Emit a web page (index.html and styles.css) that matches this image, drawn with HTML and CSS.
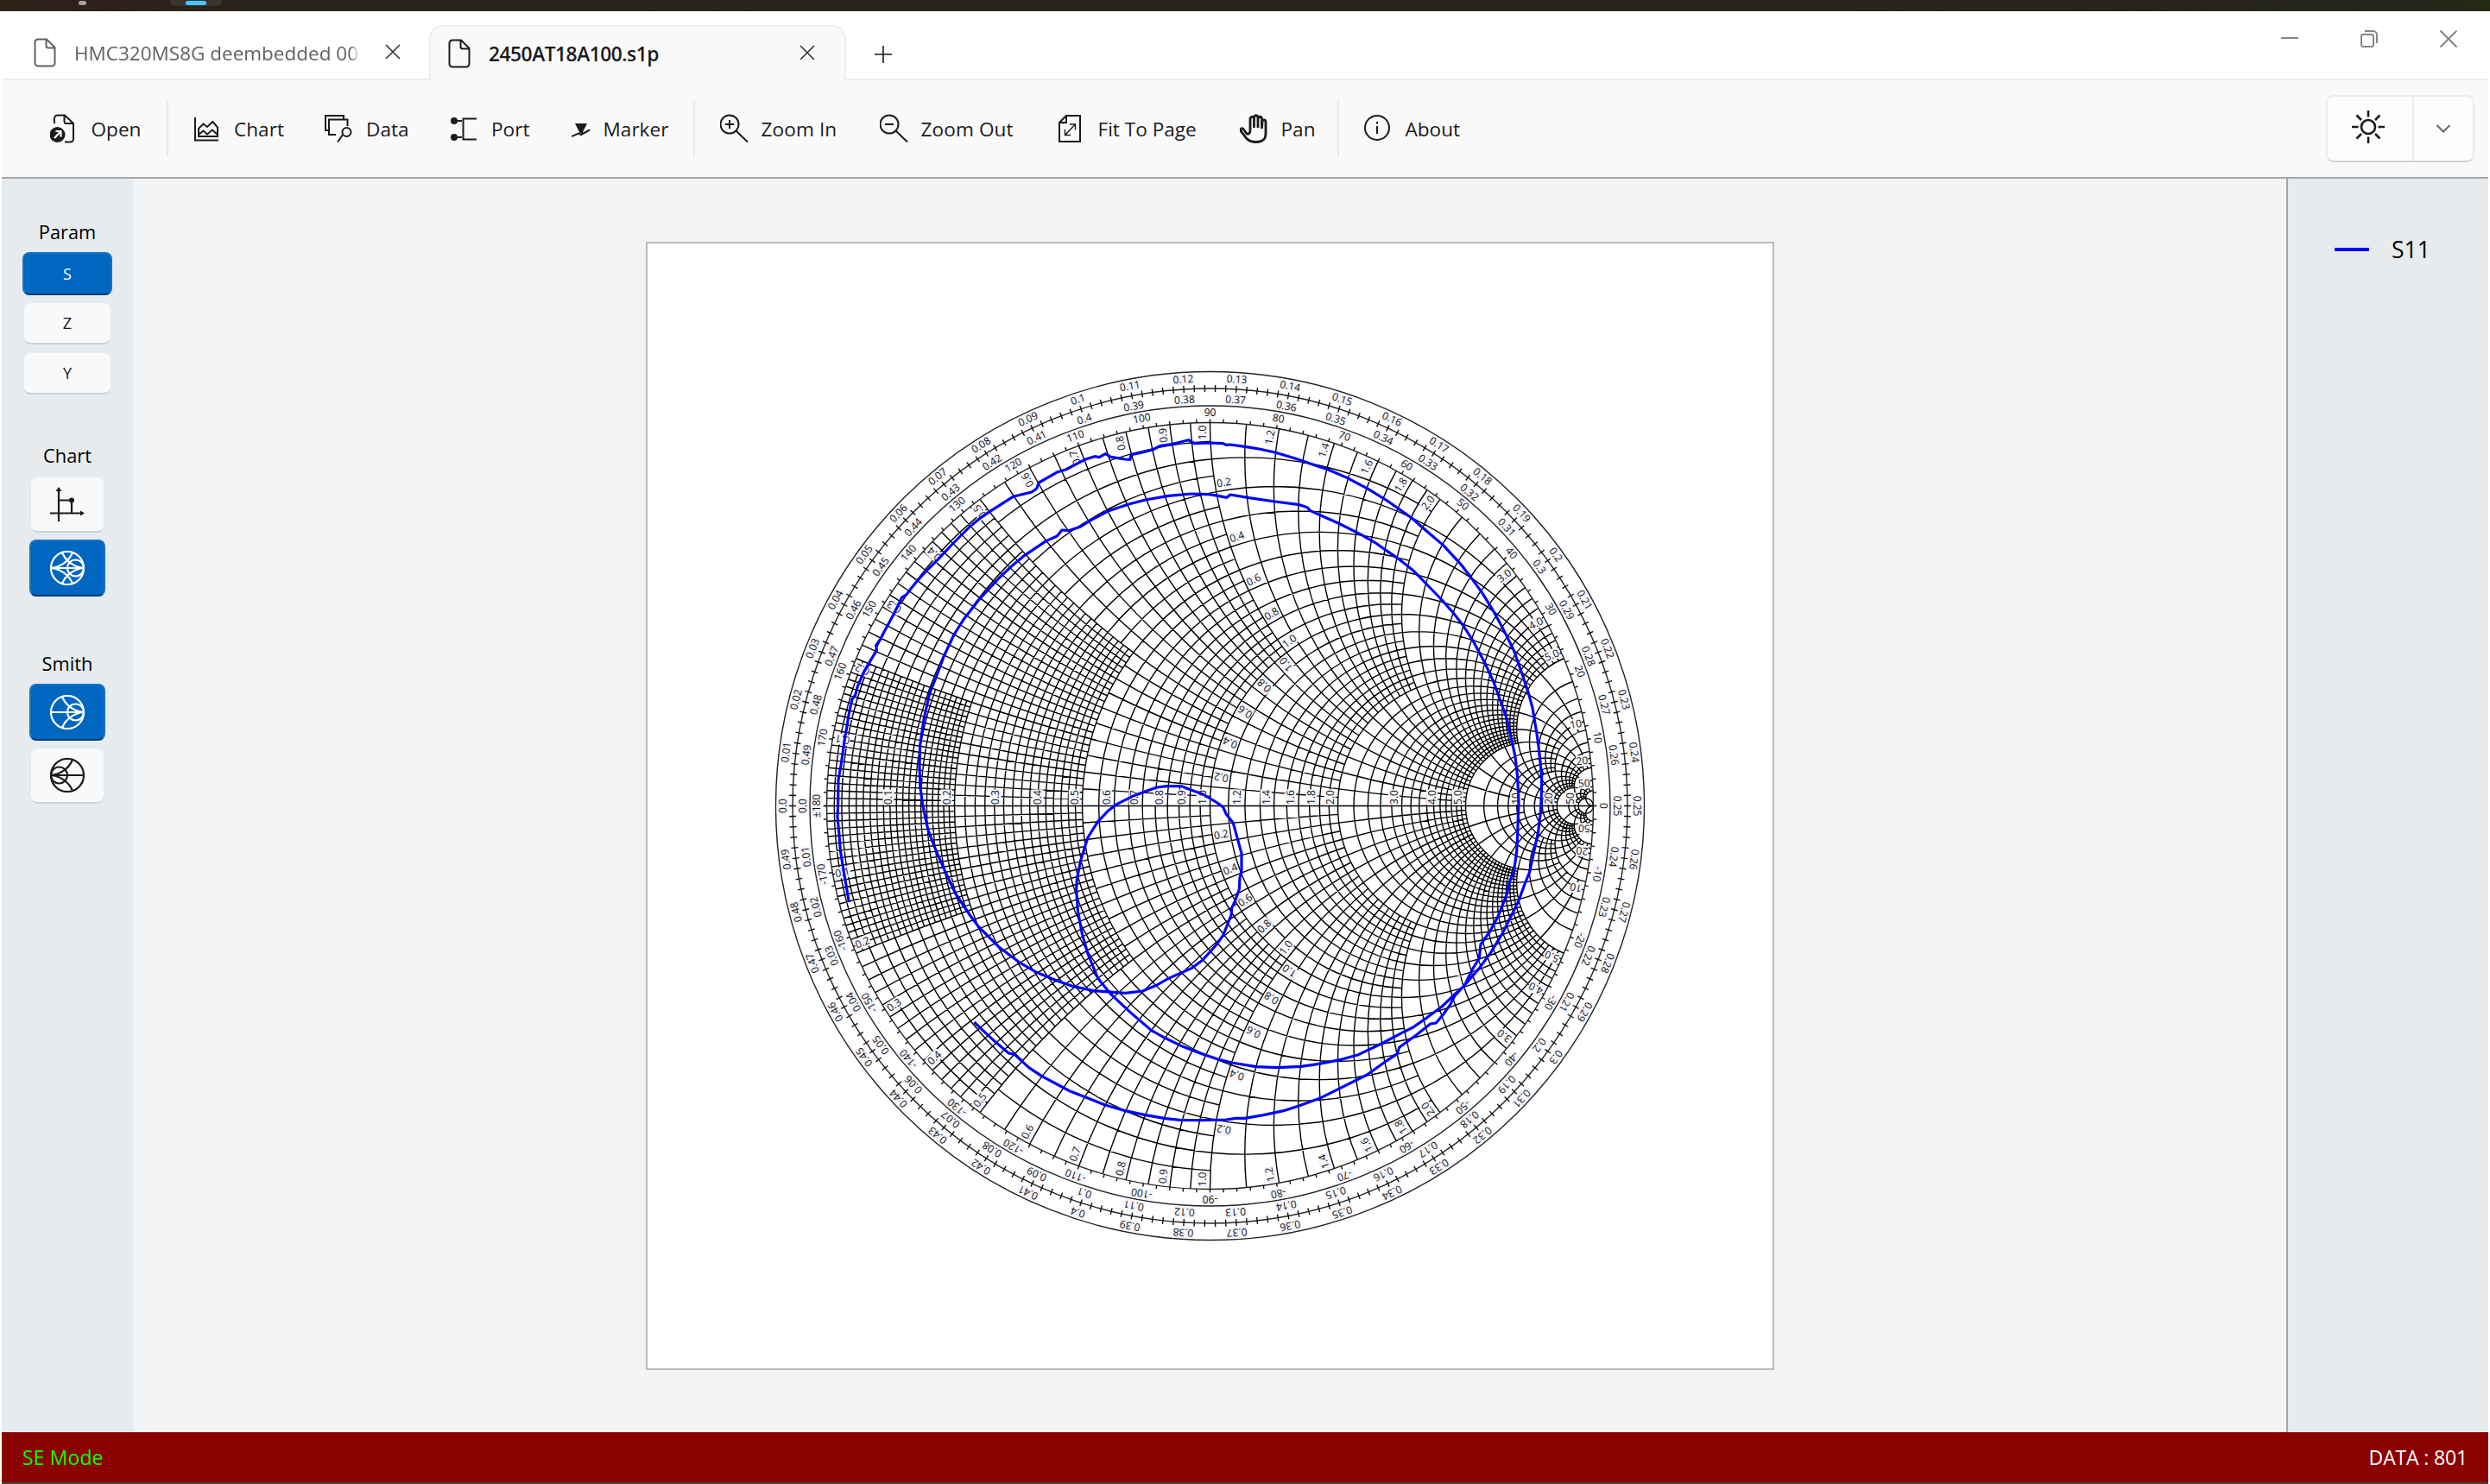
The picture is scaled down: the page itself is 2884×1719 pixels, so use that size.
FILE: index.html
```html
<!DOCTYPE html>
<html lang="en">
<head>
<meta charset="utf-8">
<title>2450AT18A100.s1p</title>
<link rel="stylesheet" href="styles.css">
</head>
<body>
<div class="desktop-strip"><i class="dot"></i><span class="task"><i class="pill"></i></span></div>
<div class="window">
  <header class="titlebar">
    <div class="tab">
      <svg class="doc" width="26" height="34" viewBox="0 0 26 34"><path d="M5 1.5H15L24.5 11V29a3.5 3.5 0 0 1-3.5 3.500H5A3.500 3.500 0 0 1 1.500 29V5A3.500 3.500 0 0 1 5 1.500zM14.500 2V9a2.500 2.500 0 0 0 2.500 2.500H24"/></svg>
      <span class="tab-title">HMC320MS8G deembedded 00</span>
      <svg class="x" width="18" height="18" viewBox="0 0 18 18"><path d="M1 1 17 17M17 1 1 17"/></svg>
    </div>
    <div class="tab active">
      <svg class="doc" width="26" height="34" viewBox="0 0 26 34"><path d="M5 1.500H15L24.500 11V29a3.500 3.500 0 0 1-3.500 3.500H5A3.500 3.500 0 0 1 1.500 29V5A3.500 3.500 0 0 1 5 1.500zM14.500 2V9a2.500 2.500 0 0 0 2.500 2.500H24"/></svg>
      <span class="tab-title">2450AT18A100.s1p</span>
      <svg class="x" width="18" height="18" viewBox="0 0 18 18"><path d="M1 1 17 17M17 1 1 17"/></svg>
    </div>
    <svg class="plus" width="20" height="20" viewBox="0 0 20 20"><path d="M10 0V20M0 10H20"/></svg>
    <div class="caption">
      <svg width="20" height="20" viewBox="0 0 20 20"><path d="M0 9H20"/></svg>
      <svg width="20" height="20" viewBox="0 0 20 20"><rect x="1" y="5" width="14" height="14" rx="2"/><path d="M5 1H14.500a4.500 4.500 0 0 1 4.500 4.500V15"/></svg>
      <svg width="20" height="20" viewBox="0 0 20 20"><path d="M.5.500 19.500 19.500M19.500.500.500 19.500"/></svg>
    </div>
  </header>

  <nav class="toolbar">
    <div class="tool"><svg width="34" height="34" viewBox="0 0 34 34"><path d="M5 11V5a3.500 3.500 0 0 1 3.500-3.500H17L27 11V29a3.500 3.500 0 0 1-3.500 3.500H17M16.500 2V8.500a2.500 2.500 0 0 0 2.500 2.500H27"/><circle cx="8.500" cy="24" r="9" class="fill"/><path d="M5 28 12 20.500M6.500 20H12.500V26.500" class="inv"/></svg><span class="w-open">Open</span></div>
    <i class="sep"></i>
    <div class="tool"><svg width="34" height="34" viewBox="0 0 34 34"><path d="M3 4V30.500H30M7 26V17L12.500 11.500 17 15 23.500 9 29 15.500V26ZM7 24 12.500 19.500 17 23.500 23 18.500 29 24"/></svg><span class="w-chart">Chart</span></div>
    <div class="tool"><svg width="34" height="34" viewBox="0 0 34 34"><path d="M6 19H1V2H22V6M13 24H5V6.500H26.500V14M21 24 15 32.500"/><circle cx="25.500" cy="21" r="5"/></svg><span class="w-data">Data</span></div>
    <div class="tool"><svg width="34" height="34" viewBox="0 0 34 34"><path d="M4 8H14M4 27H14M31 5.500H15.500V29.500H31"/><circle cx="5" cy="8" r="4" class="fill"/><circle cx="5" cy="27" r="4" class="fill"/></svg><span class="w-port">Port</span></div>
    <div class="tool narrow"><svg width="22" height="34" viewBox="0 0 22 34"><path d="M4 11H18L12.500 22 9.500 22Z" class="fill"/><path d="M0 26 8 22.500 11 24 21 18.500M12 24V21"/></svg><span class="w-marker">Marker</span></div>
    <i class="sep"></i>
    <div class="tool"><svg width="34" height="34" viewBox="0 0 34 34"><circle cx="11" cy="12" r="10.500"/><path d="M18.500 19.500 32 32.500M6 12H16M11 7V17"/></svg><span class="w-zin">Zoom In</span></div>
    <div class="tool"><svg width="34" height="34" viewBox="0 0 34 34"><circle cx="11" cy="12" r="10.500"/><path d="M18.500 19.500 32 32.500M6 12H16"/></svg><span class="w-zout">Zoom Out</span></div>
    <div class="tool"><svg width="34" height="34" viewBox="0 0 34 34"><path d="M11 2H27V32H3V10ZM11 2V10H3"/><path d="M10 24 21 12.500M15 12H21.500V18.500M9.500 18V24.500H16" class="thin"/></svg><span class="w-fit">Fit To Page</span></div>
    <div class="tool"><svg width="34" height="34" viewBox="0 0 34 34"><path d="M8 23 4 17.500C1.500 15 0 18.500 2 21L8 28.500C11 32 14 32.500 19 32.500 26 32.500 30 29 30 23V9.500C30 6 26 6 26 9.500L25.500 17V5.500C25 2.500 21.500 2.500 21 5.500V16 4C20.500 1 17 1 16.500 4V16 5.500C16 2.500 12.500 3 12 5.500V19C12 22 10 24 8 23Z" class="hand"/></svg><span class="w-pan">Pan</span></div>
    <i class="sep"></i>
    <div class="tool"><svg width="34" height="34" viewBox="0 0 34 34"><circle cx="15" cy="16" r="14"/><path d="M15 14V23M15 9V11.500"/></svg><span class="w-about">About</span></div>
    <div class="theme">
      <div class="sun"><svg width="40" height="40" viewBox="0 0 40 40"><circle cx="20" cy="20" r="8"/><path d="M20 1V8.500M20 31.500V39M1 20H8.500M31.500 20H39M6.500 6.500 12 12M28 28 33.500 33.500M33.500 6.500 28 12M12 28 6.500 33.500"/></svg></div>
      <div class="drop"><svg width="16" height="10" viewBox="0 0 16 10"><path d="M.5 1 8 8.500 15.500 1"/></svg></div>
    </div>
  </nav>

  <main class="workspace">
    <aside class="sidebar">
      <h2>Param</h2>
      <button class="btn wide on">S</button>
      <button class="btn wide">Z</button>
      <button class="btn wide">Y</button>
      <h2 class="chart-head">Chart</h2>
      <button class="btn"><svg width="40" height="40" viewBox="0 0 40 40"><path d="M0 30.500H36M10 40V4M10 15.500H25V30.500"/><path d="M10 0 13.500 5H6.500ZM40 30.500 35 27.500V33.500Z" class="fill"/><circle cx="25" cy="15.500" r="3" class="fill"/></svg></button>
      <button class="btn on"><svg width="40" height="40" viewBox="0 0 40 40"><circle cx="20" cy="20" r="19"/><circle cx="29.500" cy="20" r="9.500"/><path d="M1 20H39M14 2C18 12 28 19 39 20 28 21 18 28 14 38M26 2C22 12 12 19 1 20 12 21 22 28 26 38"/></svg></button>
      <h2 class="smith-head">Smith</h2>
      <button class="btn on last"><svg width="40" height="40" viewBox="0 0 40 40"><circle cx="20" cy="20" r="19"/><circle cx="29.500" cy="20" r="9.500"/><path d="M1 20H39M14 2C18 12 28 19 39 20 28 21 18 28 14 38"/></svg></button>
      <button class="btn"><svg width="40" height="40" viewBox="0 0 40 40"><circle cx="20" cy="20" r="19"/><circle cx="10.500" cy="20" r="9.500"/><path d="M1 20H39M26 2C22 12 12 19 1 20 12 21 22 28 26 38"/></svg></button>
    </aside>
    <section class="canvas">
      <div class="page"><svg id="smith" width="1303" height="1303" viewBox="-651.5 -651.5 1303 1303"></svg></div>
    </section>
    <aside class="legend"><i class="swatch"></i><span>S11</span></aside>
  </main>

  <footer class="status"><span class="mode">SE Mode</span><span class="count">DATA : 801</span></footer>
</div>
<script src="smith.js"></script>
</body>
</html>
```
FILE: smith.js
```js
// Smith chart: impedance grid, scales, labels and the S11 trace.
const NS = 'http://www.w3.org/2000/svg';
const svg = document.getElementById('smith');
const R = 444;
const rad = Math.PI / 180;

function add(tag, attrs, parent) {
  const el = document.createElementNS(NS, tag);
  for (const k in attrs) el.setAttribute(k, attrs[k]);
  (parent || svg).appendChild(el);
  return el;
}

// Reflection coefficient of r + jx, in chart pixels with y pointing up.
function gamma(r, x) {
  const d = (r + 1) * (r + 1) + x * x;
  return [R * (r * r - 1 + x * x) / d, R * 2 * x / d];
}

function fmt(p) { return p[0].toFixed(2) + ' ' + (-p[1]).toFixed(2); }

// Grid: nested squares, each with its own step; the last one runs to infinity.
const bands = [[0.2, 0.01], [0.5, 0.02], [1, 0.05], [2, 0.1], [5, 0.2], [10, 1], [20, 2], [50, 10], [Infinity, 50]];
let d = '';
let prev = 0;
for (const [max, step] of bands) {
  const last = max === Infinity;
  const n = last ? 1 : Math.round(max / step);
  for (let i = 1; i <= n; i++) {
    const v = i * step;
    const from = v <= prev + 1e-9 ? prev : 0;
    for (const s of [1, -1]) {
      const rEnd = last ? [R, 0] : gamma(v, s * max);
      const rr = R / (v + 1);
      d += `M${fmt(gamma(v, s * from))}A${rr} ${rr} 0 0 ${s > 0 ? 1 : 0} ${fmt(rEnd)}`;
      const xEnd = last ? [R, 0] : gamma(max, s * v);
      const xr = R / v;
      d += `M${fmt(gamma(from, s * v))}A${xr} ${xr} 0 0 ${s > 0 ? 0 : 1} ${fmt(xEnd)}`;
    }
  }
  prev = max;
}
d += `M${-R - 3} 0H${R}`;
add('path', { d, class: 'grid' });

for (const r of [R, 463.5, 483.5, 503]) add('circle', { r, class: 'ring' });

let ticks = '';
for (let a = 0; a < 360; a += 2) {
  const c = Math.cos(a * rad), s = Math.sin(a * rad);
  ticks += `M${c * R} ${s * R}L${c * (R + 4)} ${s * (R + 4)}`;
}
for (let i = 0; i < 250; i++) {
  const a = i * 1.44 * rad, c = Math.cos(a), s = Math.sin(a);
  ticks += `M${c * 479.5} ${s * 479.5}L${c * 487.5} ${s * 487.5}`;
}
add('path', { d: ticks, class: 'tick' });

// Label centred on (x, y up), rotated clockwise by rot degrees.
function label(text, x, y, rot) {
  const g = add('g', { transform: `translate(${x.toFixed(2)} ${(-y).toFixed(2)}) rotate(${rot.toFixed(2)})` });
  const w = text.length * 6.6 - (text.includes('.') ? 2.6 : 0);
  add('rect', { x: -w / 2 - 0.5, y: -6.5, width: w + 1, height: 13, class: 'label-bg' }, g);
  add('text', { y: 4.3, class: 'label' }, g).textContent = text;
  return g;
}

function polar(text, radius, deg) {
  label(text, radius * Math.cos(deg * rad), radius * Math.sin(deg * rad), 90 - deg);
}

const wl = v => (v === 0 ? '0.0' : String(Math.round(v * 100) / 100));
for (let i = 0; i < 50; i++) {
  polar(wl(i / 100), 495.3, 180 - i * 7.2);
  polar(wl(i / 100), 471.5, 180 + i * 7.2);
}
for (let a = -170; a <= 180; a += 10) polar(a === 180 ? '±180' : String(a), 456, a);

const val = v => (v >= 10 ? String(v) : v.toFixed(1));
const marks = [0.1, 0.2, 0.3, 0.4, 0.5, 0.6, 0.7, 0.8, 0.9, 1, 1.2, 1.4, 1.6, 1.8, 2, 3, 4, 5, 10, 20, 50];
for (const v of marks) {
  const t = val(v), half = v >= 10 ? 6 : 7.5;
  label(t, gamma(v, 0)[0] - 9.3, 2.5 + half, -90);
  const a = 180 - 2 * Math.atan(v) / rad;
  const c = Math.cos(a * rad), s = Math.sin(a * rad), q = R - 4 - half;
  label(t, q * c - 9 * s, q * s + 9 * c, -a);
  label(t, q * c - 9 * s, -q * s - 9 * c, a + 180);
}

for (const v of [0.2, 0.4, 0.6, 0.8, 1]) {
  const t = val(v);
  // resistance values on the x = 1 arc
  let [px, py] = gamma(v, 1);
  let k = (v + 1) / R;
  let tx = py * k, ty = -(px - R * v / (v + 1)) * k;
  let ang = Math.atan2(ty, tx) / rad;
  let x = px + 10.5 * tx - 9 * ty, y = py + 10.5 * ty + 9 * tx;
  label(t, x, y, -ang);
  label(t, x, -y, ang + 180);
  // reactance values on the r = 1 circle
  [px, py] = gamma(1, v);
  k = v / R;
  tx = (py - R / v) * k; ty = -(px - R) * k;
  ang = Math.atan2(ty, tx) / rad;
  x = px - 10.5 * tx - 9 * ty; y = py - 10.5 * ty + 9 * tx;
  label(t, x, y, -ang);
  label(t, x, -y, ang + 180);
}

// Trace vertices at a third of a pixel, measured from the upper left of the chart.
const trace = [
  280,1875, 275,1845, 262,1770, 250,1695, 245,1630, 240,1580, 242,1530, 243,1450, 252,1400, 262,1330, 266,1300, 272,1270,
  278,1230, 284,1200, 291,1170, 302,1155, 310,1125, 330,1078, 352,1040, 376,1000, 374,983, 390,960, 400,940, 436,873,
  450,845, 463,817, 480,806, 490,792, 520,755, 545,728, 590,683, 640,630, 700,570, 740,537, 770,517, 850,466, 915,450,
  932,438, 940,417, 1005,380, 1033,372, 1075,350, 1100,337, 1134,326, 1150,329, 1171,317, 1190,328, 1240,336, 1257,337,
  1260,320, 1300,312, 1335,303, 1360,290, 1405,283, 1460,269, 1480,281, 1535,279, 1580,281, 1590,286, 1605,285, 1655,292,
  1705,300, 1760,312, 1830,333, 1900,357, 1945,372, 2010,400, 2085,440, 2150,480, 2235,540, 2290,588, 2345,635, 2405,700,
  2440,745, 2480,800, 2520,865, 2550,920, 2590,1000, 2620,1085, 2640,1145, 2655,1200, 2670,1290, 2680,1365, 2687,1440,
  2686,1500, 2683,1565, 2675,1630, 2660,1700, 2645,1770, 2625,1820, 2607,1870, 2580,1925, 2550,1985, 2510,2050, 2470,2105,
  2415,2168, 2385,2195, 2340,2238, 2290,2275, 2240,2310, 2200,2330, 2130,2367, 2050,2405, 1985,2423, 1920,2436, 1850,2446,
  1770,2450, 1695,2447, 1610,2433, 1560,2420, 1500,2400, 1440,2377, 1370,2343, 1330,2320, 1260,2260, 1190,2195, 1145,2140,
  1110,2055, 1090,1985, 1075,1905, 1070,1830, 1072,1795, 1085,1730, 1110,1650, 1145,1595, 1180,1558, 1210,1535, 1270,1505,
  1310,1490, 1350,1476, 1385,1472, 1435,1472, 1470,1486, 1510,1500, 1560,1530, 1580,1545, 1590,1568, 1615,1600, 1630,1655,
  1644,1705, 1644,1770, 1638,1790, 1636,1830, 1622,1870, 1610,1895, 1608,1920, 1580,1990, 1555,2025, 1510,2075, 1470,2105,
  1390,2140, 1350,2163, 1300,2184, 1240,2191, 1130,2183, 1060,2168, 1000,2147, 930,2118, 870,2083, 800,2030, 730,1960,
  700,1920, 650,1845, 610,1760, 580,1690, 555,1625, 545,1580, 535,1530, 527,1470, 525,1400, 527,1330, 540,1240, 560,1150,
  580,1100, 610,1020, 645,945, 680,890, 735,820, 800,750, 840,712, 890,670, 965,620, 1003,603, 1020,582, 1043,584,
  1085,570, 1120,548, 1180,516, 1250,493, 1310,477, 1390,463, 1470,456, 1530,458, 1550,461, 1593,469, 1605,459, 1670,470,
  1760,483, 1845,494, 1872,503, 1883,515, 1980,558, 2060,598, 2110,627, 2150,655, 2195,686, 2240,722, 2285,768, 2340,825,
  2380,870, 2415,915, 2450,970, 2490,1045, 2520,1110, 2545,1180, 2565,1235, 2580,1300, 2595,1370, 2603,1440, 2607,1530,
  2606,1550, 2603,1640, 2600,1700, 2590,1770, 2575,1805, 2565,1850, 2545,1900, 2535,1925, 2505,1980, 2475,2022, 2470,2070,
  2445,2110, 2420,2162, 2385,2200, 2370,2230, 2345,2265, 2320,2295, 2300,2298, 2250,2338, 2192,2380, 2185,2402, 2150,2425,
  2080,2475, 1980,2525, 1915,2557, 1845,2582, 1790,2600, 1720,2615, 1655,2626, 1625,2626, 1590,2631, 1500,2633, 1430,2632,
  1380,2627, 1310,2615, 1240,2600, 1170,2580, 1095,2550, 1050,2533, 1020,2517, 950,2480, 905,2450, 855,2404, 835,2400,
  790,2362, 755,2330, 715,2292
];
add('polyline', { points: trace.join(' '), class: 'trace', transform: 'translate(-511.5 -513.5) scale(.333333)' });
```
FILE: styles.css
```css
* { box-sizing: border-box; }
body {
  margin: 0;
  width: 2884px;
  height: 1719px;
  display: flex;
  flex-direction: column;
  overflow: hidden;
  background: #fff;
  font-family: "Open Sans", "Noto Sans", sans-serif;
  color: #1b1b1b;
}
svg { display: block; flex: none; fill: none; stroke: currentColor; stroke-width: 2; }
.fill { fill: currentColor; stroke: none; }

.desktop-strip { height: 13px; background: linear-gradient(90deg, #2b2418, #2e1f19 3%, #26241c 12%, #26231c 50%, #25241a 97%, #232b12); display: flex; padding-left: 91px; }
.desktop-strip .dot { width: 9px; height: 5px; margin-top: 1px; border-radius: 3px; background: #a8a29d; }
.desktop-strip .task { width: 60px; height: 7px; margin-left: 97px; background: #38352e; border-radius: 0 0 8px 8px; padding: 1px 18px; }
.desktop-strip .pill { display: block; height: 5px; border-radius: 3px; background: #4cc2ff; }

.window { flex: 1; margin: 0 2px; display: flex; flex-direction: column; min-height: 0; }

.titlebar { height: 80px; display: flex; align-items: flex-end; background: linear-gradient(#fff 78px, #ededed 78px); }
.tab { height: 64px; width: 495px; display: flex; align-items: center; padding: 0 33px 0 37px; color: #616161; }
.tab-title { width: 330px; margin-left: 21px; overflow: hidden; white-space: nowrap; font-size: 22.500px; line-height: 34px; padding-top: 1px; }
.tab .x { margin-left: auto; stroke-width: 1.6; color: #333; margin-bottom: 2px; }
.tab:first-child .tab-title { -webkit-mask-image: linear-gradient(90deg, #000 97%, transparent); }
.tab.active { width: 483px; padding: 0 34px 0 20px; background: #f9f9f9; border: 2px solid #ededed; border-bottom: 0; border-radius: 16px 16px 0 0; color: #1b1b1b; }
.tab.active .tab-title { font-weight: 600; font-size: 22.800px; letter-spacing: -.5px; }
.plus { margin: 0 0 20px 33px; stroke-width: 1.6; }
.caption { margin-left: auto; align-self: flex-start; display: flex; gap: 72px; padding: 22px 36px 0 0; color: #868686; }

.toolbar { height: 112px; display: flex; align-items: center; padding: 0 16px 0 31px; background: #f9f9f9; }
.tool { display: flex; align-items: center; gap: 14px; padding: 0 24.5px; font-size: 22.600px; line-height: 34px; white-space: nowrap; }
.tool span { padding-top: 2px; }
.sep { width: 2px; height: 64px; margin: 0 4px; background: #e9e9e9; }
.w-open { width: 58.500px; } .w-chart { width: 56px; } .w-data { width: 48px; } .w-port { width: 44px; } .w-marker { width: 76px; }
.narrow { gap: 14.500px; }
.w-zin { width: 88px; letter-spacing: .1px; } .w-zout { width: 108px; letter-spacing: .1px; } .w-fit { width: 115px; } .w-pan { width: 37px; } .w-about { width: 66px; }
.inv { stroke: #fff; stroke-width: 2.2; }
.thin { stroke-width: 1.4; }
.hand { stroke-width: 2.8; }
.theme { margin-left: auto; height: 78px; width: 172px; display: flex; background: #fdfdfd; border: 2px solid #ebebeb; border-bottom-color: #d2d2d2; border-radius: 9px; }
.theme .sun { width: 100px; border-right: 2px solid #ebebeb; display: grid; place-items: center; padding: 0 4px 4px 0; }
.theme .sun svg { stroke-width: 2.6; }
.theme .drop { flex: 1; display: grid; place-items: center; color: #666; }

.workspace { flex: 1; display: flex; border-top: 2px solid #a6a6a6; background: #f1f3f5; min-height: 0; }
.sidebar { width: 152px; background: #e7ebee; display: flex; flex-direction: column; align-items: center; padding-top: 46px; }
.sidebar h2 { margin: 0 0 7px; font-size: 21.800px; font-weight: 400; line-height: 32px; color: #000; height: 32px; }
.sidebar .chart-head { margin-top: 45px; margin-bottom: 9px; }
.sidebar .smith-head { margin-top: 54px; margin-bottom: 7px; }
.btn { font: 18px/1 "Open Sans", sans-serif; width: 84px; height: 64px; border: 0; border-bottom: 2px solid #cfd1d3; border-radius: 8px; background: #f8f9fb; color: #1b1b1b; display: grid; place-items: center; margin: 0 0 8px; padding: 0; flex: none; }
.btn svg { stroke-width: 2.2; }
.btn.wide { width: 100px; height: 48px; margin-bottom: 10px; }
.btn.on { width: 88px; height: 66px; background: #0067c0; color: #fff; border: 2px solid #1473c5; border-bottom-color: #003e73; }
.btn.last { margin-bottom: 9px; }
.btn.wide.on { width: 104px; height: 50px; margin-bottom: 9px; }
.canvas { flex: 1; display: grid; place-items: center; padding-left: 1px; }
.page { width: 1307px; height: 1307px; background: #fff; border: 2px solid #b9bbbd; }
.legend { width: 234px; border-left: 2px solid #a6a6a6; background: #e7ebee; display: flex; align-items: flex-start; padding: 62px 0 0 54px; font-size: 26.500px; line-height: 40px; color: #000; }
.swatch { width: 40px; height: 4px; margin: 18px 26px 0 0; background: #00f; }

.status { height: 60px; background: #8b0000; border-bottom: 2px solid #4a4341; color: #fff; display: flex; justify-content: space-between; align-items: center; padding: 0 24px 0 24px; font-size: 23px; }
.mode { color: #0f0; letter-spacing: .1px; }
.count { letter-spacing: -.15px; }

.grid { stroke: #000; stroke-width: 1.4; }
.ring { stroke: #222; stroke-width: 1.4; }
.tick { stroke: #111; stroke-width: 1.4; }
.label { font-size: 12px; text-anchor: middle; fill: #111; stroke: none; }
.label-bg { fill: #f5f5fc; stroke: none; }
.trace { stroke: #00f; stroke-width: 9.5; stroke-linejoin: round; }
```
